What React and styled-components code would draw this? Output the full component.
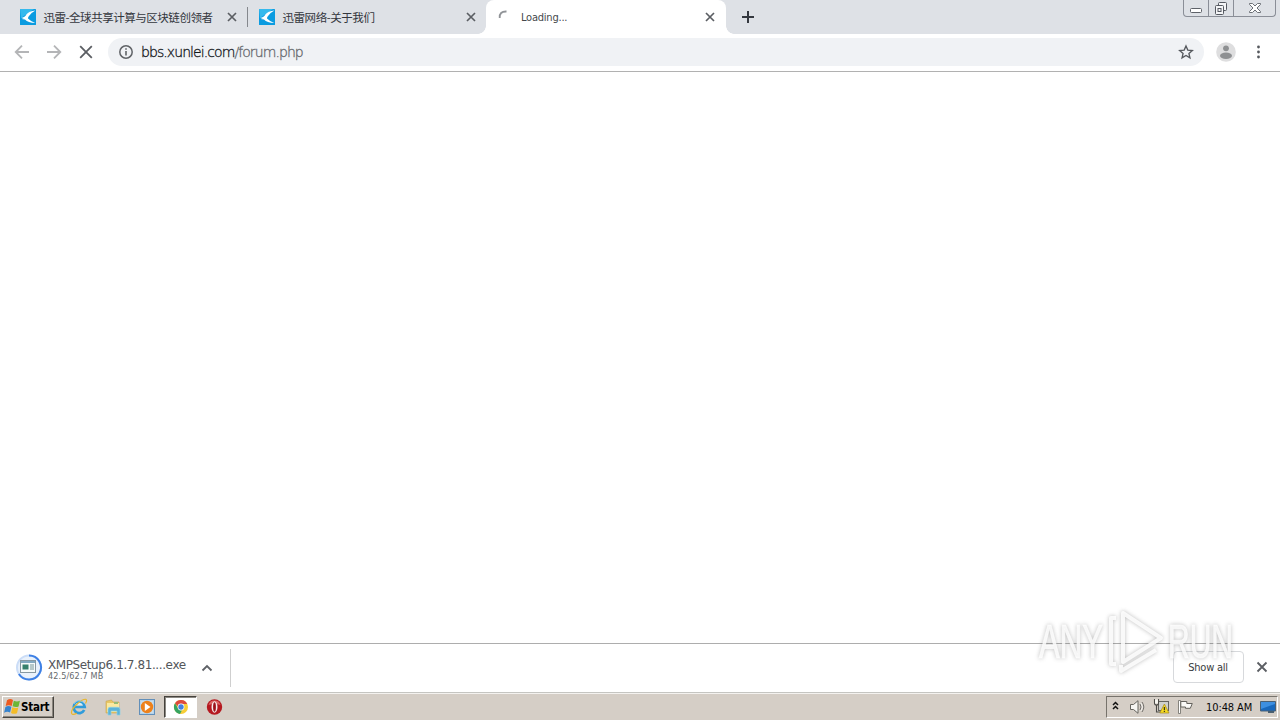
import React from "react";
import styled, { createGlobalStyle } from "styled-components";

const Global = createGlobalStyle`
  *, *::before, *::after { box-sizing: border-box; }
  body { margin: 0; overflow: hidden; background: #fff; }
  svg { display: block; flex: none; }
`;

const ui = `"DejaVu Sans Condensed", "DejaVu Sans", "Noto Sans CJK SC", sans-serif`;

const Screen = styled.div`
  position: relative;
  width: 1280px;
  height: 720px;
  display: flex;
  flex-direction: column;
  background: #fff;
  font-family: ${ui};
  font-stretch: condensed;
`;

const TabStrip = styled.header`
  height: 34px;
  display: flex;
  background: #dee1e6;
`;

const Tab = styled.div`
  position: relative;
  width: ${(p) => p.$width}px;
  height: 34px;
  display: flex;
  align-items: center;
  padding: 0 10px 0 ${(p) => p.$left}px;
  background: ${(p) => (p.$active ? "#fff" : "transparent")};
  border-radius: ${(p) => (p.$active ? "8px 8px 0 0" : "0")};
  &::before, &::after {
    content: ${(p) => (p.$active ? '""' : "none")};
    position: absolute;
    bottom: 0;
    width: 8px;
    height: 8px;
  }
  &::before { left: -8px; background: radial-gradient(circle at 0 0, transparent 7.5px, #fff 8px); }
  &::after { right: -8px; background: radial-gradient(circle at 100% 0, transparent 7.5px, #fff 8px); }
`;

const TabTitle = styled.span`
  flex: 1;
  margin-left: ${(p) => (p.$latin ? 8 : 7.5)}px;
  padding-top: ${(p) => (p.$latin ? 1 : 0)}px;
  padding-bottom: ${(p) => (p.$latin ? 0 : 1)}px;
  white-space: nowrap;
  color: ${(p) => (p.$latin ? "#45484c" : "#33363d")};
  font: ${(p) => (p.$latin ? `11px/14px ${ui}` : `11.5px/16px "Noto Sans CJK SC", sans-serif`)};
  font-stretch: condensed;
  letter-spacing: ${(p) => p.$spacing || 0}px;
`;

const TabDivider = styled.div`
  width: 1px;
  height: 20px;
  margin-top: 7px;
  background: #85888d;
`;

const NewTab = styled.button`
  width: 28px;
  height: 34px;
  margin-left: 8px;
  padding: 0;
  border: 0;
  background: none;
  display: grid;
  place-items: center;
`;

const WindowButtons = styled.div`
  display: flex;
  width: 93px;
  height: 17px;
  margin: 0 4px 0 auto;
  border: 1px solid #8a8e97;
  border-top: 0;
  border-radius: 0 0 4px 4px;
`;

const WindowButton = styled.div`
  width: ${(p) => p.$width}px;
  display: flex;
  justify-content: center;
  border-left: ${(p) => (p.$first ? 0 : 1)}px solid #8a8e97;
`;

const Toolbar = styled.div`
  height: 38px;
  display: flex;
  align-items: center;
  padding: 0 13px 2px 14px;
  border-bottom: 1px solid #b1b1b1;
`;

const NavIcons = styled.div`
  display: flex;
  gap: 16px;
  width: 94px;
`;

const Omnibox = styled.div`
  width: 1096px;
  height: 28px;
  display: flex;
  align-items: center;
  padding: 0 10px;
  border-radius: 14px;
  background: #f0f2f5;
`;

const Address = styled.span`
  flex: 1;
  margin-left: 7px;
  font-family: "DejaVu Sans Light", "DejaVu Sans", sans-serif;
  font-weight: 200;
  font-stretch: normal;
  font-size: 14px;
  line-height: 18px;
  letter-spacing: ${(p) => p.$spacing}px;
  color: #15181c;
  -webkit-text-stroke: 0.3px;
`;

const AddressPath = styled.span`
  color: #66696e;
`;

const ToolbarEnd = styled.div`
  display: flex;
  align-items: center;
  gap: 14px;
  margin-left: 12px;
`;

const Page = styled.main`
  flex: 1;
  background: #fff;
`;

const Shelf = styled.section`
  height: 49px;
  display: flex;
  align-items: flex-start;
  border-top: 1px solid #adadad;
`;

const Download = styled.div`
  width: 231px;
  height: 38px;
  margin-top: 5px;
  display: flex;
  align-items: center;
  padding-left: 15px;
  border-right: 1px solid #cfcfcf;
`;

const DownloadText = styled.div`
  width: 146px;
  margin-left: 5px;
  margin-top: 2px;
`;

const FileName = styled.div`
  font-family: "DejaVu Sans", sans-serif;
  font-stretch: normal;
  font-size: 12px;
  line-height: 13px;
  letter-spacing: -0.4px;
  white-space: nowrap;
  color: #53565a;
  padding-top: 1px;
  margin-bottom: -1px;
`;

const FileSize = styled.div`
  font-size: 9px;
  line-height: 10px;
  letter-spacing: 0.12px;
  color: #66696d;
`;

const ShelfActions = styled.div`
  display: flex;
  align-items: center;
  gap: 11px;
  margin: 7px 11px 0 auto;
`;

const ShowAll = styled.button`
  width: 71px;
  height: 32px;
  padding: 0 1px 0 0;
  border: 1px solid #d7d9dc;
  border-radius: 4px;
  background: #fff;
  color: #393c40;
  font: 11px ${ui};
  font-stretch: condensed;
  letter-spacing: -0.25px;
`;

const Taskbar = styled.footer`
  height: 28px;
  display: flex;
  align-items: center;
  padding: 1px 2px 1px 2px;
  background: #d5cec6;
  border-top: 1px solid #c5c5c1;
  box-shadow: inset 0 1px #f4f2ef;
`;

const StartButton = styled.button`
  width: 52px;
  height: 22px;
  display: flex;
  align-items: center;
  padding: 0 0 0 1px;
  border: 1px solid;
  border-color: #fff #48453f #48453f #fff;
  box-shadow: inset -1px -1px #8b867e;
  background: #d5cec6;
  color: #000;
  font: bold 11.5px ${ui};
  font-stretch: condensed;
  letter-spacing: -0.25px;
`;

const QuickLaunch = styled.nav`
  display: flex;
  align-items: center;
  margin-left: 8px;
`;

const TaskItem = styled.div`
  width: ${(p) => (p.$active ? 33 : 34)}px;
  height: 22px;
  display: grid;
  place-items: center;
  border: ${(p) => (p.$active ? "1px solid" : "0")};
  border-color: #45423d #fff #fff #45423d;
  box-shadow: ${(p) => (p.$active ? "inset 1px 1px #8c8983" : "none")};
  background: ${(p) => (p.$active ? "#fff" : "transparent")};
`;

const Tray = styled.div`
  width: 172px;
  height: 22px;
  display: flex;
  align-items: center;
  margin-left: auto;
  padding-left: 5px;
  border: 1px solid;
  border-color: #77736c #fff #fff #77736c;
`;

const TrayIcon = styled.div`
  width: ${(p) => p.$width}px;
  display: flex;
`;

const Clock = styled.span`
  width: 54px;
  padding-top: 1px;
  font-size: 11px;
  line-height: 13px;
  white-space: nowrap;
  letter-spacing: -0.1px;
  color: #080808;
`;

const Watermark = styled.svg`
  position: absolute;
  left: 1030px;
  top: 600px;
  pointer-events: none;
  filter: drop-shadow(0 0 2px rgba(70, 70, 70, 0.42));
`;

const Favicon = () => (
  <svg width="16" height="16" viewBox="0 0 16 16">
    <rect width="16" height="16" rx=".5" fill="#0b9be0" />
    <path d="M0 0h14L1 9z" fill="#35b9ed" />
    <path d="M1 9Q5.2 8 6.3 5.4 9 2.3 15.4 1.5 11 3.8 8.8 7.2 7.8 8.6 8 9.6q2.7 2.8 7.2 4.4Q8 13.9 5 10.5L1.6 10l2.3-.7z" fill="#fff" />
  </svg>
);

const Close = ({ size = 20, reach = 4, weight = 1.7 }) => (
  <svg width={size} height={size} viewBox={`${-size / 2} ${-size / 2} ${size} ${size}`}>
    <path d={`M${-reach} ${-reach}L${reach} ${reach}M${reach} ${-reach}L${-reach} ${reach}`} stroke="#5b5e63" strokeWidth={weight} />
  </svg>
);

const Spinner = () => (
  <svg width="16" height="16" viewBox="0 0 16 16">
    <path d="M2.7 9Q2.1 2.2 9.5 2.5" fill="none" stroke="#909397" strokeWidth="1.8" />
  </svg>
);

const Arrow = ({ right }) => (
  <svg width="16" height="16" viewBox="0 0 16 16">
    <path d={right ? "M1 8h13M8 1.7 14.3 8 8 14.3" : "M15 8H2M8 1.7 1.7 8 8 14.3"} fill="none" stroke="#b4b5b7" strokeWidth="1.8" />
  </svg>
);

const Info = () => (
  <svg width="16" height="16" viewBox="0 0 16 16">
    <circle cx="8" cy="8" r="6.2" fill="none" stroke="#606367" strokeWidth="1.5" />
    <path d="M8 7v4.5M8 4.2v1.6" stroke="#606367" strokeWidth="1.6" />
  </svg>
);

const Star = () => (
  <svg width="16" height="16" viewBox="0 0 24 24">
    <path d="m12 3 2.7 6.2 6.8.6-5.1 4.4 1.5 6.6L12 17.2l-5.9 3.6 1.5-6.6-5.1-4.4 6.8-.6z" fill="none" stroke="#55585d" strokeWidth="2" />
  </svg>
);

const Avatar = () => (
  <svg width="20" height="20" viewBox="0 0 20 20">
    <circle cx="10" cy="10" r="9.8" fill="#dededf" />
    <circle cx="10" cy="6.3" r="2.9" fill="#8e9092" />
    <ellipse cx="10" cy="13.8" rx="6" ry="3.2" fill="#8e9092" />
  </svg>
);

const DownloadProgress = () => (
  <svg width="28" height="28" viewBox="0 0 28 28">
    <circle cx="14" cy="13.5" r="12" fill="#e9f1fb" stroke="#cbddf7" strokeWidth="2" />
    <path d="M14 1.5a12 12 0 1 1-10.1 18.5" fill="none" stroke="#3e80e5" strokeWidth="2" />
    <rect x="5.5" y="6.5" width="15" height="12" fill="#f6faf9" stroke="#8798a2" />
    <path d="M6 7h14v2H6z" fill="#83a9c0" />
    <path d="M7.5 10.5h6v5h-6z" fill="#37806b" />
    <path d="M15 11h4M15 13h4M15 15h4" stroke="#779698" />
  </svg>
);

const WindowsLogo = () => (
  <svg width="17" height="16" viewBox="0 0 17 16">
    <path d="M3 1.2q3-2 6-.3L7.7 7q-3-1.4-6 0z" fill="#ed5a20" />
    <path d="M9.8 1.7q3 1.6 6.1.1l-1.3 5.7q-3 1.2-6-.3z" fill="#6bb637" />
    <path d="M1.4 7.9q3-1.6 6-.1l-1.3 5.6q-3-1.6-6 .3z" fill="#3683ce" />
    <path d="M8.3 8.2q3 1.5 6 .2L13 14.2q-3 1.4-6-.2z" fill="#f4bc28" />
  </svg>
);

const Explorer = () => (
  <svg width="18" height="18" viewBox="0 0 18 18">
    <path d="M14.2 12A5.5 5.5 0 1 1 14.7 9H4.5" fill="none" stroke="#2f9cdb" strokeWidth="2.7" />
    <path d="M5 7.2a4.3 4.3 0 0 1 8 0z" fill="#d9edf5" />
    <path d="M15.5 5.5Q17.5 2 15.8 1.3 13 .8 7.7 5.5.3 12 1.7 15.5q1 2 5-.3" fill="none" stroke="#e8b72b" strokeWidth="1.2" />
    <path d="M4 6a6 6 0 0 1 10.3-.5" stroke="#7bc8ed" fill="none" />
  </svg>
);

const Folder = () => (
  <svg width="18" height="18" viewBox="0 0 18 18">
    <path d="M2 3.2 7.5 2 9 4h6v11H2z" fill="#e8c765" stroke="#c9a44d" strokeWidth=".6" />
    <path d="M3 5h12v9H3z" fill="#fae9a0" />
    <path d="M4 11.2Q4 9.3 6 9.3h8q2 0 2 2V17h-3v-4H7v4H4z" fill="#5bb3d8" stroke="#8bd0e7" strokeWidth=".7" />
    <path d="M10 4h4v2h-4z" fill="#96bd77" />
  </svg>
);

const Player = () => (
  <svg width="18" height="18" viewBox="0 0 18 18">
    <rect x="1.5" y="1.5" width="15" height="15" fill="#b5d3eb" stroke="#628fb9" />
    <rect x="3" y="3" width="12" height="12" fill="#c9deec" />
    <circle cx="9" cy="9" r="6.2" fill="#ed811b" />
    <path d="m6.8 5 5.7 4-5.7 4z" fill="#fff" />
  </svg>
);

const Chrome = () => (
  <svg width="16" height="16" viewBox="0 0 16 16">
    <circle cx="8" cy="8" r="7" fill="#f7cd36" />
    <path d="M2 4.3A7 7 0 0 1 14.2 5H8a3 3 0 0 0-3 2.5z" fill="#dd4a3d" />
    <path d="M2 4.3 5.2 9.5A3.3 3.3 0 0 0 9 11.2L7 15A7 7 0 0 1 2 4.3z" fill="#36a461" />
    <circle cx="8" cy="8" r="3.4" fill="#fff" />
    <circle cx="8" cy="8" r="2.7" fill="#4380df" />
  </svg>
);

const Opera = () => (
  <svg width="18" height="18" viewBox="0 0 18 18">
    <circle cx="9.5" cy="9" r="7.7" fill="#b51920" />
    <path d="M3.5 7a6.3 6.3 0 0 1 12 0q-6-2-12 0z" fill="#db6462" />
    <ellipse cx="9.5" cy="9" rx="3" ry="5.7" fill="#f6eeee" />
    <ellipse cx="9.5" cy="9" rx="1.4" ry="4.8" fill="#9c1219" />
  </svg>
);

const Speaker = () => (
  <svg width="18" height="16" viewBox="0 0 18 16">
    <path d="M1.5 5.5h3L9 1.7v12.6l-4.5-3.8h-3z" fill="#f6f5f2" stroke="#66645f" />
    <path d="M11 5q2 3 0 6M13 3q3.6 5 0 10" fill="none" stroke="#716f6b" />
    <path d="M12 4q3 4 0 8" fill="none" stroke="#fff" strokeWidth=".7" />
  </svg>
);

const Network = () => (
  <svg width="17" height="17" viewBox="0 0 17 17">
    <rect x="5.5" y="3.5" width="10" height="9" fill="#cfd0cc" stroke="#63635f" />
    <path d="M1.5 1v4q0 2 2 2t2-2V1M3.5 7v7H8" fill="none" stroke="#4d4c48" strokeWidth="1.1" />
    <path d="M2 1.5h3v4H2z" fill="#f6f5ef" />
    <path d="m11.4 6 4.6 9H6.8z" fill="#f7dc22" stroke="#a3871d" strokeWidth=".7" />
    <path d="M11.4 9v3.2M11.4 13.1v1" stroke="#403b1e" strokeWidth="1.3" />
  </svg>
);

const Flag = () => (
  <svg width="17" height="16" viewBox="0 0 17 16">
    <path d="M1.5 1.5h2v13h-2z" fill="#fff" stroke="#6b6963" strokeWidth=".8" />
    <path d="M3.8 2.5h6v2h5.5l-2 4.8H8.5V8H3.8z" fill="#faf9f6" stroke="#64625d" />
  </svg>
);

const Monitor = () => (
  <svg width="16" height="16" viewBox="0 0 16 16">
    <path d="M.5 2.5h15v9.5H.5z" fill="#1868bd" stroke="#4b6074" />
    <path d="M1 3h14v2L1 10z" fill="#3d8fe1" />
    <path d="M8 12.3h6v1.5H8z" fill="#29455c" />
  </svg>
);

export default function App() {
  return (
    <Screen>
      <Global />
      <TabStrip>
        <Tab $width={247} $left={20}>
          <Favicon />
          <TabTitle $spacing={-0.47}>迅雷-全球共享计算与区块链创领者</TabTitle>
          <Close size={10} />
        </Tab>
        <TabDivider />
        <Tab $width={238} $left={11}>
          <Favicon />
          <TabTitle $spacing={-0.45}>迅雷网络-关于我们</TabTitle>
          <Close size={10} />
        </Tab>
        <Tab $width={240} $left={11} $active>
          <Spinner />
          <TabTitle $latin $spacing={-0.22}>Loading...</TabTitle>
          <Close size={12} />
        </Tab>
        <NewTab aria-label="New tab">
          <svg width="14" height="14" viewBox="0 0 14 14"><path d="M1 7h12M7 1v12" stroke="#34383f" strokeWidth="2" /></svg>
        </NewTab>
        <WindowButtons>
          <WindowButton $width={24} $first>
            <svg width="14" height="16" viewBox="0 0 14 16"><rect x="1.5" y="8.5" width="11" height="4" rx="1" fill="#fff" stroke="#5e6269" /></svg>
          </WindowButton>
          <WindowButton $width={25}>
            <svg width="14" height="16" viewBox="0 0 14 16" fill="#f4f5f7" stroke="#555961">
              <rect x="4.5" y="2.5" width="8" height="8" rx="1" />
              <rect x="1.5" y="5.5" width="8" height="9" rx="1" />
              <rect x="4" y="8.5" width="3" height="3" />
            </svg>
          </WindowButton>
          <WindowButton $width={42}>
            <svg width="14" height="16" viewBox="0 0 14 16"><path d="M1.5 3.5h3L7 6l2.5-2.5h3v1L9 8l3.5 3.5v1h-3L7 10l-2.5 2.5h-3v-1L5 8 1.5 4.5z" fill="#fff" stroke="#5e6269" strokeWidth=".9" /></svg>
          </WindowButton>
        </WindowButtons>
      </TabStrip>
      <Toolbar>
        <NavIcons><Arrow /><Arrow right /><Close size={16} reach={5.8} weight={1.8} /></NavIcons>
        <Omnibox>
          <Info />
          <Address $spacing={-0.92}>bbs.xunlei.com<AddressPath>/forum.php</AddressPath></Address>
          <Star />
        </Omnibox>
        <ToolbarEnd>
          <Avatar />
          <svg width="16" height="16" viewBox="0 0 16 16" fill="#55585d"><circle cx="8.5" cy="3" r="1.4" /><circle cx="8.5" cy="8" r="1.4" /><circle cx="8.5" cy="13" r="1.4" /></svg>
        </ToolbarEnd>
      </Toolbar>
      <Page />
      <Shelf>
        <Download>
          <DownloadProgress />
          <DownloadText>
            <FileName>XMPSetup6.1.7.81....exe</FileName>
            <FileSize>42.5/62.7 MB</FileSize>
          </DownloadText>
          <svg width="26" height="20" viewBox="0 0 26 20"><path d="m8.5 12.5 4.5-4.5 4.5 4.5" fill="none" stroke="#5f6267" strokeWidth="1.8" /></svg>
        </Download>
        <ShelfActions>
          <ShowAll>Show all</ShowAll>
          <Close size={14} reach={4.5} weight={1.8} />
        </ShelfActions>
      </Shelf>
      <Taskbar>
        <StartButton><WindowsLogo />Start</StartButton>
        <QuickLaunch>
          <TaskItem><Explorer /></TaskItem>
          <TaskItem><Folder /></TaskItem>
          <TaskItem><Player /></TaskItem>
          <TaskItem $active><Chrome /></TaskItem>
          <TaskItem><Opera /></TaskItem>
        </QuickLaunch>
        <Tray>
          <TrayIcon $width={17}>
            <svg width="8" height="12" viewBox="0 0 8 12"><path d="m1 4 2.5-2.5L6 4M1 8l2.5-2.5L6 8" fill="none" stroke="#111" strokeWidth="1.5" /></svg>
          </TrayIcon>
          <TrayIcon $width={24}><Speaker /></TrayIcon>
          <TrayIcon $width={24}><Network /></TrayIcon>
          <TrayIcon $width={29}><Flag /></TrayIcon>
          <Clock>10:48 AM</Clock>
          <Monitor />
        </Tray>
      </Taskbar>
      <Watermark width="220" height="86" viewBox="0 0 220 86">
        <g fill="#fff" fillOpacity=".82" stroke="#fff" strokeOpacity=".6" strokeWidth="1.2" fontFamily='"Liberation Sans Narrow", "Liberation Sans", sans-serif' fontSize="49">
          <text x="9" y="58" textLength="64" lengthAdjust="spacingAndGlyphs">ANY</text>
          <text x="138" y="58" textLength="65" lengthAdjust="spacingAndGlyphs">RUN</text>
        </g>
        <g fill="none" stroke="#fff" strokeOpacity=".85" strokeWidth="4" strokeLinejoin="round">
          <path d="M93 13 131 38 93 62z" />
          <path d="M86 18h-5v46h5M91 65v6l35-21" />
        </g>
      </Watermark>
    </Screen>
  );
}
